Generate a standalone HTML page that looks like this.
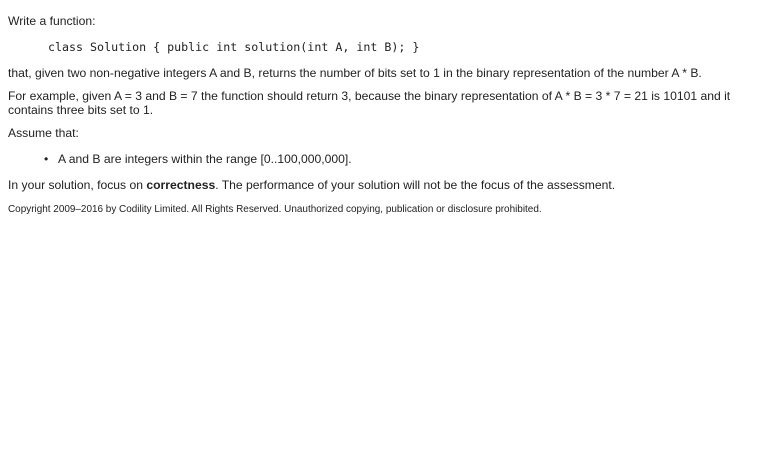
<!DOCTYPE html>
<html><head><meta charset="utf-8"><style>
body{margin:0;background:#fff;width:760px;height:450px;position:relative;font-family:"Liberation Sans",Arial,sans-serif;color:#222;font-size:12.15px;}
.l{position:absolute;left:8px;white-space:nowrap;line-height:14px}
.code{font-family:"DejaVu Sans Mono","Liberation Mono",monospace;font-size:11.65px;left:48px}
.small{font-size:9.95px}
</style></head><body>
<div class="l" style="top:14px">Write a function:</div>
<div class="l code" style="top:40px">class Solution { public int solution(int A, int B); }</div>
<div class="l" style="top:66px">that, given two non-negative integers A and B, returns the number of bits set to 1 in the binary representation of the number A * B.</div>
<div class="l" style="top:89px">For example, given A = 3 and B = 7 the function should return 3, because the binary representation of A * B = 3 * 7 = 21 is 10101 and it</div>
<div class="l" style="top:103px">contains three bits set to 1.</div>
<div class="l" style="top:126px">Assume that:</div>
<div class="l" style="top:152px;left:44px">•</div>
<div class="l" style="top:152px;left:58px">A and B are integers within the range [0..100,000,000].</div>
<div class="l" style="top:178px">In your solution, focus on <b>correctness</b>. The performance of your solution will not be the focus of the assessment.</div>
<div class="l small" style="top:203px">Copyright 2009–2016 by Codility Limited. All Rights Reserved. Unauthorized copying, publication or disclosure prohibited.</div>
</body></html>
